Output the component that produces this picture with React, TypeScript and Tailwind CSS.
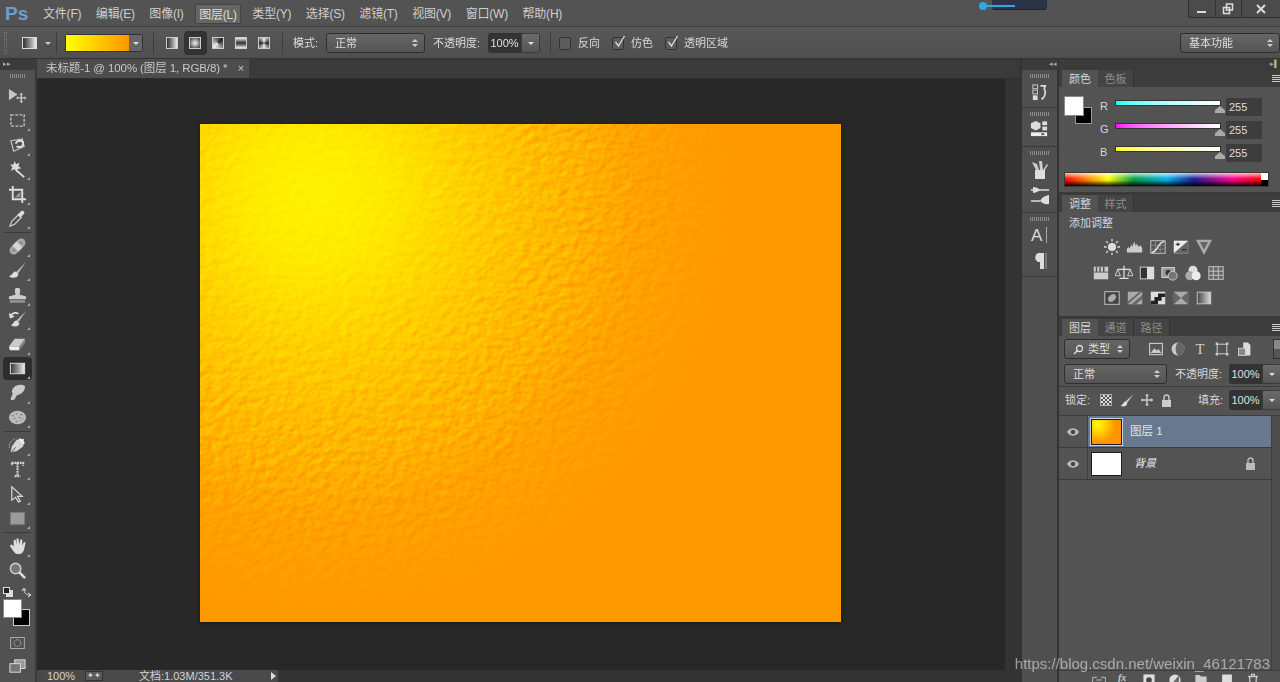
import React from "react";

const F = "font-['Liberation_Sans','Noto_Sans_CJK_SC',sans-serif]";

function I({ children, s = 20, c = "" }: { children: React.ReactNode; s?: number; c?: string }) {
  return (
    <svg width={s} height={s} viewBox="0 0 20 20" className={"shrink-0 " + c}>
      {children}
    </svg>
  );
}

const G = "#c6c6c6";

const toolIcons: Record<string, React.ReactNode> = {
  move: (<><path d="M1 2l9 6-9 6z" fill={G} /><path d="M14 6l2 2h-1.200v2.800H17.500V9.500l2 2-2 2v-1.300h-2.700V15H16l-2 2-2-2h1.200v-2.800H10.500v1.300l-2-2 2-2v1.300h2.700V8H12z" fill={G} /></>),
  marquee: <rect x="3" y="4" width="14" height="12" fill="none" stroke={G} strokeWidth="1.400" strokeDasharray="3 1.600" />,
  lasso: (<><path d="M3 5l12-2 2 8-11 5z" fill="none" stroke={G} strokeWidth="1.300" /><path d="M8 8c2-4 8-4 8 0s-5 4-7 3" fill="none" stroke="#ddd" strokeWidth="2" /></>),
  wand: (<><path d="M9 11l8 7" stroke="#ddd" strokeWidth="2" /><path d="M7 1l1.500 3.500L12 3l-1 3.700 3 2-3.700.7L9 13 7 9.700 3 11l1.700-3.600L2 5l3.800-.2z" fill="#ddd" /></>),
  crop: (<><path d="M5 1v14h14M1 5h14v14" fill="none" stroke="#ddd" strokeWidth="2" /><path d="M7 13l6-6v6z" fill="#999" /></>),
  eyedrop: (<><path d="M2 18l2-5 7-7 3 3-7 7z" fill="none" stroke="#ccc" strokeWidth="1.300" /><path d="M10 6l4-4c2-1 4 1 3 3l-4 4z" fill="#ddd" /></>),
  heal: (<g transform="rotate(-45 10 10)"><rect x="0" y="5.500" width="20" height="9" rx="4.500" fill="#aaa" /><rect x="7" y="5.500" width="6" height="9" fill="#d5d5d5" /><path d="M3 9h3M3 11h3M14 9h3M14 11h3" stroke="#777" /></g>),
  brush: (<><path d="M19 1L8 12l2 2z" fill="#bbb" /><path d="M8 11c-3 0-3 4-7 5 4 3 9 2 10-2z" fill="#ddd" /></>),
  stamp: (<><path d="M8 2h4l1 3-1 4 7 2v3H1v-3l7-2-1-4z" fill="#ccc" /><rect x="2" y="15" width="16" height="2.500" fill="#999" /></>),
  history: (<><path d="M19 1L9 11l2 2z" fill="#bbb" /><path d="M9 11c-3 0-3 4-6 5 4 2 8 2 9-2z" fill="#ddd" /><path d="M2 7c2-4 6-5 9-3" fill="none" stroke="#ddd" strokeWidth="1.800" /><path d="M1 3l1 6 5-2z" fill="#ddd" /></>),
  eraser: (<><path d="M7 4h11l-6 8H1z" fill="#ccc" /><path d="M1 12h11v4H2z" fill="#eee" /><path d="M12 12l6-8v4l-6 8z" fill="#888" /></>),
  gradient: (<><defs><linearGradient id="tg"><stop offset="0" stopColor="#333" /><stop offset="1" stopColor="#eee" /></linearGradient></defs><rect x="2.500" y="4.500" width="15" height="11" fill="url(#tg)" stroke="#ddd" /></>),
  smudge: (<path d="M8 2c5-2 10-1 10 1s-2 7-6 8-3 2-5 5c-2 2-5 1-4-1l2-5c-2-3 0-6 3-8z" fill="#c9c9c9" />),
  sponge: (<><ellipse cx="10" cy="10" rx="9" ry="7" fill="#bbb" /><path d="M4 8h2M8 6h2M13 7h2M6 11h2M11 10h2M15 11h1M8 14h2M13 13h1" stroke="#777" strokeWidth="1.200" /></>),
  pen: (<><path d="M17 3l-8 1-5 7-1 6 6-1 7-5z" fill="#d4d4d4" /><path d="M12 3l5 5" stroke="#eee" strokeWidth="2.400" /><path d="M4 17l4-5" stroke="#555" /><path d="M7 3C3 5 0 9 2 14" fill="none" stroke="#bbb" strokeDasharray="1.400 1.200" /></>),
  type: (<path d="M4 3h12v3M10 3v14M7 17h6M4 3v3" fill="none" stroke="#d4d4d4" strokeWidth="2.200" strokeDasharray="2 .8" />),
  select: <path d="M4 2v14l4-3 3 5 2-1-3-5h5z" fill="#555" stroke="#ddd" strokeWidth="1.200" />,
  shape: <rect x="2.500" y="3.500" width="15" height="13" fill="#9a9a9a" stroke="#777" />,
  hand: (<path d="M3 11l-1-2 2-1 2 2V3l2 0 1 5V1.500h2L12 8l1-5.500h2L15 9l2-4 1.500 1L17 13c-1 3-2 5-6 5-4 0-5-3-8-7z" fill="#ddd" />),
  zoom: (<><circle cx="8" cy="8" r="5.500" fill="#777" stroke="#ccc" strokeWidth="1.600" /><path d="M12 12l6 6" stroke="#ddd" strokeWidth="2.600" /></>),
  mask: (<><rect x="2" y="3" width="16" height="13" fill="none" stroke="#bbb" /><circle cx="10" cy="9.500" r="4" fill="none" stroke="#ddd" strokeDasharray="1.500 1.200" /></>),
  screen: (<><rect x="7" y="3" width="11" height="9" fill="#999" stroke="#ddd" /><rect x="2" y="7" width="11" height="9" fill="#777" stroke="#ddd" /></>),
};

function Tool({ name, corner = true, active = false }: { name: string; corner?: boolean; active?: boolean }) {
  return (
    <div className="relative flex items-center justify-center shrink-0 h-[24.5px]">
      <div className={"relative flex items-center justify-center w-[29px] h-[23px] rounded-sm " + (active ? "bg-[#2d2d2d]" : "")}>
        <I s={19}>{toolIcons[name]}</I>
        {corner && <span className="absolute right-[2px] bottom-[1px] w-0 h-0 border-l-[3px] border-l-transparent border-b-[3px] border-b-[#aaa]" />}
      </div>
    </div>
  );
}

const Sep = () => <div className="h-px bg-[#3a3a3a] mx-[4px] my-[1px] shrink-0" />;

function Updown() {
  return (
    <span className="flex flex-col gap-[2px] items-center">
      <span className="w-0 h-0 border-x-[3px] border-x-transparent border-b-[3px] border-b-[#ccc]" />
      <span className="w-0 h-0 border-x-[3px] border-x-transparent border-t-[3px] border-t-[#ccc]" />
    </span>
  );
}

function Select({ text, w, h = "h-[20px]", pre }: { text: string; w: string; h?: string; pre?: React.ReactNode }) {
  return (
    <div className={"flex items-center justify-between pl-[8px] pr-[6px] rounded-[3px] border border-[#2e2e2e] bg-gradient-to-b from-[#666] to-[#545454] text-[#dedede] text-[11px] shrink-0 " + w + " " + h}>
      <span className="flex items-center gap-[4px]">{pre}{text}</span>
      <Updown />
    </div>
  );
}

function Pct({ w = "w-[33px]" }: { w?: string }) {
  return (
    <div className="flex h-[20px] shrink-0 rounded-[3px] overflow-hidden">
      <div className={"bg-[#333] text-[#e0e0e0] text-[11px] flex items-center justify-center " + w}>100%</div>
      <div className="w-[19px] bg-gradient-to-b from-[#6c6c6c] to-[#555] flex items-center justify-center border border-[#3a3a3a]">
        <span className="w-0 h-0 border-x-[3px] border-x-transparent border-t-[3px] border-t-[#ddd]" />
      </div>
    </div>
  );
}

function Check({ on, label }: { on?: boolean; label: string }) {
  return (
    <div className="flex items-center gap-[7px] shrink-0">
      <div className="relative w-[12px] h-[13px] rounded-[2px] bg-[#5c5c5c] border border-[#333]">
        {on && (
          <svg width="14" height="14" viewBox="0 0 14 14" className="absolute -top-[3px] left-0">
            <path d="M2.500 7l3 4 6-10" fill="none" stroke="#ddd" strokeWidth="1.300" />
          </svg>
        )}
      </div>
      <span className="text-[11px] text-[#d8d8d8]">{label}</span>
    </div>
  );
}

const gradBtn = [
  "bg-gradient-to-r from-[#333] to-[#eee]",
  "bg-[radial-gradient(circle,#f4f4f4,#333)]",
  "bg-[conic-gradient(from_45deg,#222,#eee_50%,#222)]",
  "bg-gradient-to-b from-[#eee] via-[#333] to-[#eee]",
  "bg-[conic-gradient(#eee,#222,#eee,#222,#eee)]",
];

function OptionsBar() {
  return (
    <div className="h-[32px] pt-[1px] flex items-center bg-gradient-to-b from-[#585858] to-[#4f4f4f] border-b border-[#333] shrink-0">
      <div className="w-[3px] h-[22px] ml-[4px] border-x border-dotted border-[#777]" />
      <div className="ml-[15px] w-[15px] h-[12px] bg-gradient-to-r from-[#333] to-[#eee] border border-[#ddd]" />
      <span className="ml-[8px] w-0 h-0 border-x-[3px] border-x-transparent border-t-[3px] border-t-[#ccc]" />
      <div className="w-px h-[22px] bg-[#3d3d3d] ml-[5px]" />
      <div className="ml-[8px] flex h-[18px] w-[78px] border border-[#333] rounded-[2px]">
        <div className="w-[63px] bg-gradient-to-r from-[#ffff00] to-[#ff9400]" />
        <div className="flex-1 bg-[#666] flex items-center justify-center">
          <span className="w-0 h-0 border-x-[3px] border-x-transparent border-t-[3px] border-t-[#ddd]" />
        </div>
      </div>
      <div className="w-px h-[22px] bg-[#3d3d3d] ml-[10px]" />
      <div className="flex ml-[7px] w-[114px]">
        {gradBtn.map((g, i) => (
          <div key={i} className={"h-[24px] flex-1 flex items-center justify-center rounded-sm " + (i === 1 ? "bg-[#333]" : "")}>
            <div className={"w-[12px] h-[12px] border border-[#ccc] " + g} />
          </div>
        ))}
      </div>
      <div className="w-px h-[22px] bg-[#3d3d3d] ml-[7px]" />
      <span className="ml-[10px] text-[11px] text-[#dcdcdc] w-[33px] shrink-0">模式:</span>
      <Select text="正常" w="w-[99px]" />
      <span className="ml-[8px] text-[11px] text-[#dcdcdc] w-[55px] shrink-0">不透明度:</span>
      <Pct />
      <div className="w-px h-[22px] bg-[#3d3d3d] ml-[10px] mr-[8px]" />
      <div className="flex gap-[12px]">
        <Check label="反向" />
        <Check on label="仿色" />
        <Check on label="透明区域" />
      </div>
      <div className="ml-auto">
        <Select text="基本功能" w="w-[100px]" />
      </div>
    </div>
  );
}

const menus = ["文件(F)", "编辑(E)", "图像(I)", "图层(L)", "类型(Y)", "选择(S)", "滤镜(T)", "视图(V)", "窗口(W)", "帮助(H)"];

function MenuBar() {
  return (
    <div className="relative h-[27px] pt-[1px] flex items-center bg-[#535353] border-b border-[#3e3e3e] shrink-0">
      <span className="w-[40px] pl-[5px] text-[#6b9fd1] font-bold text-[19px] leading-none">Ps</span>
      <div className="flex items-center gap-[8.500px]">
        {menus.map((m, i) => (
          <span key={m} className={"px-[3px] h-[20px] leading-[20px] text-[12px] tracking-[-.2px] rounded-[2px] text-[#cfcfcf] " + (i === 3 ? "bg-[#666] border border-[#444] leading-[18px] px-[2px] text-[#dcdcdc]" : "")}>
            {m}
          </span>
        ))}
      </div>
      <div className="absolute right-0 top-0 flex h-[18px] w-[92px] border-l border-b border-[#2f2f2f] rounded-bl-[3px] bg-[#4b4b4b]">
        <div className="flex-1 border-r border-[#333] flex items-end justify-center pb-[4px]"><span className="w-[9px] h-[2px] bg-[#ddd]" /></div>
        <div className="flex-1 border-r border-[#333] flex items-center justify-center">
          <svg width="12" height="12" viewBox="0 0 12 12"><path d="M4.500 1h6v6h-6zM1.500 4.500h6v6h-6z" fill="#4b4b4b" stroke="#ddd" strokeWidth="1.500" /></svg>
        </div>
        <div className="w-[38px] flex items-center justify-center">
          <svg width="10" height="10" viewBox="0 0 10 10"><path d="M1 1l8 8M9 1l-8 8" stroke="#ddd" strokeWidth="2" /></svg>
        </div>
      </div>
      <div className="absolute left-[979px] top-0 flex items-center">
        <div className="absolute left-[13px] top-0 w-[55px] h-[10px] bg-[#2b3346] rounded-b-[3px] border-b border-[#222]" />
        <span className="relative w-[8px] h-[8px] rounded-full bg-[#2fa9e0] mt-[2px]" />
        <span className="relative w-[28px] h-[2px] bg-[#2fa9e0] mt-[2px]" />
      </div>
    </div>
  );
}

function Toolbar() {
  return (
    <div className="w-[37px] shrink-0 flex flex-col border-r-[2px] border-[#3a3a3a] bg-[#515151]">
      <div className="h-[11px] bg-[#3b3b3b] text-[#aaa] text-[7px] leading-[10px] pl-[3px] shrink-0">▸▸</div>
      <div className="h-[15px] flex justify-center pt-[4px] shrink-0"><div className="w-[16px] h-[4px] bg-[repeating-linear-gradient(90deg,#8a8a8a_0,#8a8a8a_1px,transparent_1px,transparent_2px)]" /></div>
      <div className="flex flex-col -mt-[1px]">
        <Tool name="move" corner={false} />
        <Tool name="marquee" />
        <Tool name="lasso" />
        <Tool name="wand" />
        <Tool name="crop" />
        <Tool name="eyedrop" />
        <Sep />
        <Tool name="heal" />
        <Tool name="brush" />
        <Tool name="stamp" />
        <Tool name="history" />
        <Tool name="eraser" />
        <Tool name="gradient" active />
        <Tool name="smudge" />
        <Tool name="sponge" />
        <Sep />
        <Tool name="pen" />
        <Tool name="type" />
        <Tool name="select" />
        <Tool name="shape" />
        <Sep />
        <Tool name="hand" />
        <Tool name="zoom" corner={false} />
      </div>
      <div className="flex justify-between px-[3px] h-[14px] items-center mt-[2px]">
        <svg width="10" height="10" viewBox="0 0 10 10"><rect x="3" y="3" width="7" height="7" fill="#ddd" /><rect x=".5" y=".5" width="6" height="6" fill="#222" stroke="#ddd" /></svg>
        <svg width="11" height="11" viewBox="0 0 11 11"><path d="M1 4l2-3 2 3M3 2c0 4 2 6 6 6M7 6l3 2-3 2" fill="none" stroke="#ddd" /></svg>
      </div>
      <div className="relative h-[30px] shrink-0">
        <div className="absolute left-[13px] top-[10px] w-[17px] h-[17px] bg-black border border-[#ccc]" />
        <div className="absolute left-[3px] top-0 w-[19px] h-[19px] bg-white border border-[#888]" />
      </div>
      <div className="flex justify-center pt-[6px]"><I s={17}>{toolIcons.mask}</I></div>
      <div className="flex justify-center pt-[5px]"><I s={19}>{toolIcons.screen}</I></div>
    </div>
  );
}

function Artwork() {
  return (
    <svg width="641" height="498" viewBox="0 0 641 498" className="block shrink-0 shadow-[0_1px_4px_rgba(0,0,0,.5)]">
      <defs>
        <radialGradient id="sun" gradientUnits="userSpaceOnUse" cx="115" cy="70" r="400">
          <stop offset="0" stopColor="#fff000" />
          <stop offset=".16" stopColor="#ffe800" />
          <stop offset=".36" stopColor="#ffcb00" />
          <stop offset=".6" stopColor="#ffab00" />
          <stop offset=".8" stopColor="#ff9a00" />
          <stop offset="1" stopColor="#ff9900" />
        </radialGradient>
        <radialGradient id="fade" gradientUnits="userSpaceOnUse" cx="115" cy="70" r="470">
          <stop offset="0" stopColor="#888" />
          <stop offset=".55" stopColor="#888" />
          <stop offset=".75" stopColor="#333" />
          <stop offset=".9" stopColor="#000" />
        </radialGradient>
        <mask id="texMask" maskUnits="userSpaceOnUse" x="0" y="0" width="641" height="498">
          <rect width="641" height="498" fill="url(#fade)" />
        </mask>
        <filter id="bump" x="0" y="0" width="100%" height="100%" colorInterpolationFilters="sRGB">
          <feTurbulence type="fractalNoise" baseFrequency="0.11 0.13" numOctaves="2" seed="8" result="n" />
          <feDiffuseLighting in="n" surfaceScale="1.500" diffuseConstant="1" lightingColor="#ffffff">
            <feDistantLight azimuth="225" elevation="40" />
          </feDiffuseLighting>
        </filter>
      </defs>
      <rect width="641" height="498" fill="url(#sun)" />
      <g mask="url(#texMask)" className="mix-blend-overlay">
        <rect width="641" height="498" filter="url(#bump)" />
      </g>
    </svg>
  );
}

function Workspace() {
  return (
    <div className="flex-1 min-w-0 flex flex-col bg-[#282828]">
      <div className="h-[20px] flex bg-[#3a3a3a] shrink-0 border-b border-[#2e2e2e]">
        <div className="w-[212px] bg-[#4d4d4d] flex items-center justify-between pl-[9px] pr-[5px] text-[11.500px] text-[#c8c8c8] tracking-[-.1px]">
          <span>未标题-1 @ 100% (图层 1, RGB/8) *</span>
          <span className="text-[11px] leading-none">×</span>
        </div>
      </div>
      <div className="flex-1 min-h-0 flex">
        <div className="flex-1 flex items-start justify-center pt-[45px] pr-[2px]">
          <Artwork />
        </div>
        <div className="w-[15px] bg-[#333]" />
      </div>
      <div className="h-[12px] flex shrink-0 bg-[#333] overflow-hidden">
        <div className="w-[241px] bg-[#494949] flex items-center text-[11px] leading-none text-[#d4d4d4] relative">
          <span className="ml-[10px] w-[38px]">100%</span>
          <span className="w-[18px] h-[10px] rounded-[1px] border border-[#333] bg-[#5a5a5a] text-[8px] leading-[8px] text-center text-[#ddd]">✦✦</span>
          <span className="ml-[36px]">文档:1.03M/351.3K</span>
          <span className="absolute right-[2px] w-0 h-0 border-y-[4px] border-y-transparent border-l-[5px] border-l-[#ddd]" />
        </div>
      </div>
    </div>
  );
}

const dockIcons: React.ReactNode[] = [
  <><rect x="3" y="2" width="5" height="4" fill="none" stroke="#ccc" /><rect x="3" y="7.500" width="5" height="4" fill="none" stroke="#ccc" /><rect x="3" y="13" width="5" height="5" fill="#ddd" /><path d="M11 3h5l-1 3c2 4 1 9-3 11" fill="none" stroke="#ddd" strokeWidth="1.800" /></>,
  <><path d="M6 2l5 2.500v5L6 12l-5-2.500v-5z" fill="#ddd" /><rect x="13" y="2.500" width="5" height="4" fill="#ddd" /><rect x="13" y="8" width="5" height="4" fill="#ddd" /><rect x="1" y="14" width="17" height="4" fill="#eee" /><rect x="12" y="15" width="3" height="2" fill="#555" /></>,
  <><rect x="5" y="10" width="10" height="9" fill="#ddd" /><path d="M6 10L2 2l5 2 2 6zM10 10l-1-9 3 0 1 9zM13 10l4-6 1 1-3 5z" fill="#ccc" /></>,
  <><path d="M1 4h18M1 15h9" stroke="#ddd" strokeWidth="1.600" /><path d="M3 1c5 0 7 3 7 3s-3 3-7 3zM10 15c2-5 9-6 9-6v9c-4 1-7-1-9-3z" fill="#ddd" /></>,
  <><text x="1" y="16" fontSize="17" fill="#ddd" fontFamily="Liberation Sans, sans-serif">A</text><path d="M16.500 2v16" stroke="#aaa" /></>,
  <><path d="M12 2H8a5 5 0 000 9h2v7h4V2z" fill="#ddd" /><rect x="15" y="2" width="2" height="16" fill="#777" /></>,
];

function Dock() {
  const Grip = () => <div className="h-[8px] flex justify-center pt-[2px] shrink-0"><div className="w-[19px] h-[4px] bg-[repeating-linear-gradient(90deg,#8a8a8a_0,#8a8a8a_1px,transparent_1px,transparent_2px)]" /></div>;
  return (
    <div className="w-[39px] shrink-0 flex flex-col bg-[#4f4f4f] border-x-[2px] border-[#333]">
      <div className="h-[11px] bg-[#3b3b3b] text-[#aaa] text-[7px] leading-[10px] text-right pr-[1px] shrink-0 -mr-[1px]">◂◂</div>
      <div className="h-[38px] border-b border-[#3a3a3a] pt-[2px] shrink-0"><Grip /><div className="flex justify-center pt-[3px]"><I s={19}>{dockIcons[0]}</I></div></div>
      <div className="h-[39px] border-b border-[#3a3a3a] pt-[2px] shrink-0"><Grip /><div className="flex justify-center pt-[1px]"><I s={19}>{dockIcons[1]}</I></div></div>
      <div className="h-[66px] border-b border-[#3a3a3a] pt-[2px] shrink-0"><Grip /><div className="flex flex-col items-center gap-[6px] pt-[3px]"><I s={20}>{dockIcons[2]}</I><I s={20}>{dockIcons[3]}</I></div></div>
      <div className="h-[64px] border-b border-[#3a3a3a] pt-[2px] shrink-0"><Grip /><div className="flex flex-col items-center gap-[6px] pt-[2px]"><I s={20}>{dockIcons[4]}</I><I s={20}>{dockIcons[5]}</I></div></div>
    </div>
  );
}

function Tabs({ items }: { items: string[] }) {
  return (
    <div className="h-[17px] flex bg-[#3d3d3d] items-stretch relative shrink-0">
      <div className="w-[3px]" />
      {items.map((t, i) => (
        <div key={t} className={"w-[36px] text-center text-[11px] leading-[18px] " + (i === 0 ? "bg-[#535353] text-[#d6d6d6]" : "bg-[#444] text-[#8d8d8d] border-r border-[#333]")}>
          {t}
        </div>
      ))}
      <div className="absolute right-0 top-[5px] flex flex-col gap-[1px] w-[8px]">
        <span className="h-px bg-[#ccc]" /><span className="h-px bg-[#ccc]" /><span className="h-px bg-[#ccc]" /><span className="h-px bg-[#ccc]" />
      </div>
    </div>
  );
}

function SliderRow({ label, bar }: { label: string; bar: string }) {
  return (
    <div className="flex items-center h-[23px]">
      <span className="w-[21px] pl-[6px] text-[11px] leading-none text-[#d6d6d6] font-normal">{label}</span>
      <div className="relative w-[104px] h-[4px] border border-[#333] -mt-[7px] box-content">
        <div className={"w-full h-full " + bar} />
        <span className="absolute -right-[5px] top-[5px] w-[10px] h-[7px] bg-[#aaa] [clip-path:polygon(50%_0,100%_60%,100%_100%,0_100%,0_60%)]" />
      </div>
      <div className="ml-[5px] w-[36px] h-[18px] bg-[#3d3d3d] text-[#ddd] text-[11px] leading-[18px] pl-[3px]">255</div>
    </div>
  );
}

function ColorPanel() {
  return (
    <div className="h-[125px] flex flex-col bg-[#535353] shrink-0 border-b-[3px] border-[#3a3a3a]">
      <Tabs items={["颜色", "色板"]} />
      <div className="relative flex pl-[5px] pt-[9px]">
        <div className="relative w-[30px] h-[30px] shrink-0">
          <div className="absolute left-[11px] top-[11px] w-[17px] h-[17px] bg-black border border-[#999]" />
          <div className="absolute left-0 top-0 w-[20px] h-[20px] bg-white border border-[#888]" />
        </div>
        <div className="flex flex-col -mt-[1px]">
          <SliderRow label="R" bar="bg-gradient-to-r from-[#00ffff] to-white" />
          <SliderRow label="G" bar="bg-gradient-to-r from-[#ff00ff] to-white" />
          <SliderRow label="B" bar="bg-gradient-to-r from-[#ffff00] to-white" />
        </div>
      </div>
      <div className="relative mx-[5px] mt-[8px] w-[205px] h-[15px] flex border border-[#3a3a3a]">
        <div className="flex-1 relative bg-[linear-gradient(90deg,#ff0000,#ffff00_22%,#00a040_35%,#00b0f0_52%,#1c1c90_66%,#ff0090_85%,#ff0000)]">
          <div className="absolute inset-0 bg-[linear-gradient(180deg,rgba(255,255,255,.75),rgba(255,255,255,0)_45%,rgba(0,0,0,0)_55%,rgba(0,0,0,.95))]" />
        </div>
        <div className="w-[7px] flex flex-col"><div className="flex-1 bg-white" /><div className="flex-1 bg-black" /></div>
      </div>
    </div>
  );
}

const adj: React.ReactNode[][] = [
  [
    <><circle cx="10" cy="10" r="4.500" fill="#ddd" /><path d="M10 1v3M10 16v3M1 10h3M16 10h3M3.500 3.500l2 2M14.500 14.500l2 2M16.500 3.500l-2 2M5.500 14.500l-2 2" stroke="#ddd" strokeWidth="1.400" /></>,
    <path d="M1 16V12l2-2 1 2 2-5 1 3 2-6 2 5 1-3 2 4 2-2 2 3v5z" fill="#ccc" />,
    <><rect x="2" y="3" width="16" height="14" fill="#555" stroke="#ccc" /><path d="M2 8h16M2 12.500h16M7 3v14M12.500 3v14" stroke="#888" /><path d="M3 16c7 0 6-11 14-12" fill="none" stroke="#eee" strokeWidth="1.500" /></>,
    <><rect x="2" y="3" width="16" height="14" fill="#eee" /><path d="M2 17L18 3v14z" fill="#666" /><path d="M4 7h5M6.500 5v4M11 13h5" stroke="#222" strokeWidth="1.200" /></>,
    <><path d="M1 2h18l-9 17z" fill="#aaa" /><path d="M5.500 4.500h9L10 13z" fill="#666" /></>,
  ],
  [
    <><rect x="2" y="3" width="16" height="14" fill="#ccc" /><path d="M2 9h16" stroke="#555" /><path d="M5 3v6M9 3v6M13 3v6" stroke="#555" strokeWidth="1.600" /></>,
    <><path d="M10 2v14M3 6h14M5 16h10" stroke="#ddd" strokeWidth="1.400" /><path d="M3 6l-3 7h6zM17 6l-3 7h6z" fill="none" stroke="#ddd" /></>,
    <><rect x="2" y="3" width="16" height="14" fill="#ddd" /><rect x="3" y="4" width="7" height="12" fill="#333" /></>,
    <><rect x="1" y="4" width="14" height="11" fill="#999" stroke="#ddd" /><circle cx="8" cy="9.500" r="3" fill="#333" /><circle cx="13" cy="13" r="5" fill="#777" stroke="#ccc" /></>,
    <><circle cx="10" cy="7" r="5" fill="#ddd" /><circle cx="6.500" cy="13" r="5" fill="#aaa" /><circle cx="13.500" cy="13" r="5" fill="#eee" /></>,
    <><rect x="2" y="3" width="16" height="14" fill="#666" stroke="#ccc" /><path d="M2 8h16M2 12.500h16M7 3v14M12.500 3v14" stroke="#ccc" /></>,
  ],
  [
    <><rect x="2" y="3" width="16" height="14" fill="#444" stroke="#ccc" /><ellipse cx="10" cy="10" rx="5" ry="3.500" fill="#aaa" transform="rotate(-40 10 10)" /></>,
    <><rect x="2" y="3" width="16" height="14" fill="#aaa" /><path d="M2 14L15 3h3L2 17zM6 17L18 7v4l-7 6z" fill="#666" /></>,
    <><rect x="2" y="3" width="16" height="14" fill="#ddd" /><path d="M2 17v-4h4V9h4V5h8v4h-4v4h-4v4z" fill="#222" /></>,
    <><rect x="2" y="3" width="16" height="14" fill="#aaa" /><path d="M2 3l8 7-8 7zM18 3l-8 7 8 7z" fill="#666" /></>,
    <><defs><linearGradient id="ag"><stop offset="0" stopColor="#444" /><stop offset="1" stopColor="#ddd" /></linearGradient></defs><rect x="2.500" y="3.500" width="15" height="13" fill="url(#ag)" stroke="#ccc" /></>,
  ],
];

function AdjustPanel() {
  return (
    <div className="h-[124px] flex flex-col bg-[#535353] shrink-0 border-b-[3px] border-[#3a3a3a]">
      <Tabs items={["调整", "样式"]} />
      <div className="pl-[10px] pt-[2px] text-[11px] leading-[18px] text-[#d6d6d6]">添加调整</div>
      <div className="flex flex-col items-center gap-[7.500px] pt-[6px] pr-[23px]">
        {adj.map((row, i) => (
          <div key={i} className="flex gap-[5px]">
            {row.map((n, j) => <I key={j} s={18}>{n}</I>)}
          </div>
        ))}
      </div>
    </div>
  );
}

function Eye() {
  return (
    <svg width="14" height="10" viewBox="0 0 14 10"><path d="M1 5c3-5 9-5 12 0-3 5-9 5-12 0z" fill="#bbb" /><circle cx="7" cy="5" r="2.200" fill="#444" /></svg>
  );
}

function LockIcon({ c = "#ccc" }: { c?: string }) {
  return (
    <svg width="11" height="13" viewBox="0 0 11 13"><path d="M3 6V3.500a2.500 2.500 0 015 0V6" fill="none" stroke={c} strokeWidth="1.400" /><rect x="1" y="6" width="9" height="7" fill={c} /></svg>
  );
}

function LayersPanel() {
  return (
    <div className="flex-1 min-h-0 flex flex-col bg-[#535353]">
      <Tabs items={["图层", "通道", "路径"]} />
      <div className="h-[26px] flex items-center pl-[5px] shrink-0">
        <Select
          text="类型"
          w="w-[66px]"
          pre={<svg width="11" height="11" viewBox="0 0 11 11"><circle cx="6.500" cy="4.500" r="3" fill="none" stroke="#ddd" strokeWidth="1.300" /><path d="M4.500 6.500L1 10" stroke="#ddd" strokeWidth="1.500" /></svg>}
        />
        <div className="flex gap-[6px] items-center ml-[18px]">
          <I s={16}><rect x="2" y="3" width="16" height="14" fill="#555" stroke="#ccc" strokeWidth="1.400" /><path d="M3 15l5-6 3 3 2-2 4 5z" fill="#ccc" /></I>
          <I s={16}><circle cx="10" cy="10" r="8" fill="#ccc" /><path d="M10 2a8 8 0 010 16c-4-4-4-12 0-16z" fill="#666" /></I>
          <span className="w-[16px] text-center text-[15px] leading-none text-[#ccc] font-['Liberation_Serif',serif]">T</span>
          <I s={16}><rect x="4" y="4" width="12" height="12" fill="none" stroke="#ccc" strokeWidth="1.300" /><path d="M2 2h3v3H2zM15 2h3v3h-3zM2 15h3v3H2zM15 15h3v3h-3z" fill="#ccc" /></I>
          <I s={16}><path d="M9 2h6l3 3v13H9z" fill="#ddd" /><rect x="3" y="9" width="9" height="9" fill="#888" stroke="#ddd" /></I>
        </div>
        <div className="ml-auto w-[7px] h-[20px] flex flex-col border border-[#333] border-r-0">
          <div className="flex-1 bg-[#888]" /><div className="flex-1 bg-[#555]" />
        </div>
      </div>
      <div className="h-[25px] flex items-center pl-[5px] shrink-0 border-b border-[#3e3e3e]">
        <Select text="正常" w="w-[103px]" />
        <span className="ml-[8px] w-[54px] text-[11px] text-[#d8d8d8] shrink-0">不透明度:</span>
        <Pct />
      </div>
      <div className="h-[29px] flex items-center pl-[6px] shrink-0 border-b border-[#3e3e3e] pb-[2px]">
        <span className="w-[34px] text-[11px] text-[#d8d8d8] shrink-0">锁定:</span>
        <div className="flex items-center gap-[6px]">
          <span className="w-[12px] h-[12px] mx-[1px] border border-[#aaa] bg-[repeating-conic-gradient(#ddd_0_25%,#555_0_50%)] bg-[length:4px_4px]" />
          <I s={15}><path d="M19 2L9 11l2 2z" fill="#ccc" /><path d="M9 11c-3 0-3 4-7 6 4 2 9 1 9-4z" fill="#ddd" /></I>
          <I s={14}><path d="M10 1l3 3h-2v5h5V7l3 3-3 3v-2h-5v5h2l-3 3-3-3h2v-5H4v2l-3-3 3-3v2h5V4H7z" fill="#ccc" /></I>
          <span className="ml-[1px]"><LockIcon /></span>
        </div>
        <span className="ml-[26px] w-[31px] text-[11px] text-[#d8d8d8] shrink-0">填充:</span>
        <Pct />
      </div>
      <div className="flex-1 min-h-0 flex">
        <div className="w-[212px] shrink-0 flex flex-col">
          <div className="flex h-[32px] border-b border-[#3c3c3c]">
            <div className="w-[29px] flex items-center justify-center border-r border-[#3f3f3f]"><Eye /></div>
            <div className="flex-1 bg-[#67788f] flex items-center text-[11.500px] text-[#e4e4e4]">
              <div className="relative ml-[3px] w-[31px] h-[26px] border border-[#1d1d1d] bg-[radial-gradient(circle_at_20%_20%,#ffff00,#ff9400_60%)] outline outline-[1px] outline-[#c8d2de]" />
              <span className="ml-[8px]">图层 1</span>
            </div>
          </div>
          <div className="flex h-[32px] border-b border-[#3c3c3c]">
            <div className="w-[29px] flex items-center justify-center border-r border-[#3f3f3f]"><Eye /></div>
            <div className="flex-1 flex items-center">
              <div className="ml-[3px] w-[31px] h-[24px] bg-white border border-[#1d1d1d]" />
              <span className="ml-[12px] text-[11px] italic text-[#eee]">背景</span>
              <span className="ml-auto mr-[15px]"><LockIcon c="#bbb" /></span>
            </div>
          </div>
        </div>
        <div className="flex-1 border-l border-[#3f3f3f] bg-[#4d4d4d]" />
      </div>
      <div className="h-[12px] shrink-0 flex items-start justify-end gap-[12px] pt-[2px] pr-[20px] overflow-hidden border-t border-[#3e3e3e]">
        <I s={14}><path d="M7 6H4a4 4 0 000 8h3M13 6h3a4 4 0 010 8h-3M6 10h8" fill="none" stroke="#bbb" strokeWidth="1.600" /></I>
        <span className="text-[10px] italic font-bold leading-[9px] text-[#ccc] font-['Liberation_Serif',serif] w-[12px]">fx</span>
        <I s={14}><rect x="2" y="2" width="16" height="16" fill="#ddd" /><circle cx="10" cy="10" r="4" fill="#444" /></I>
        <I s={14}><circle cx="10" cy="10" r="8" fill="#ddd" /><path d="M15 4L5 16c8 2 13-4 10-12z" fill="#666" /></I>
        <I s={14}><path d="M2 3h6l2 2h8v12H2z" fill="#ccc" /></I>
        <I s={14}><path d="M3 2h14v16H8l-5-5z" fill="#ddd" /></I>
        <I s={14}><path d="M3 5h14M8 5V2h4v3M5 5l1 14h8l1-14" fill="none" stroke="#ccc" strokeWidth="1.800" /></I>
      </div>
    </div>
  );
}

function RightPanels() {
  return (
    <div className="w-[221px] shrink-0 flex flex-col bg-[#3b3b3b]">
      <div className="h-[11px] bg-[#3b3b3b] text-[#aaa] text-[7px] leading-[10px] text-right pr-[1px] shrink-0">▸▌</div>
      <ColorPanel />
      <AdjustPanel />
      <LayersPanel />
    </div>
  );
}

export default function App() {
  return (
    <div className={"relative w-[1280px] h-[682px] overflow-hidden flex flex-col bg-[#535353] " + F}>
      <MenuBar />
      <OptionsBar />
      <div className="flex-1 min-h-0 flex">
        <Toolbar />
        <Workspace />
        <Dock />
        <RightPanels />
      </div>
      <span className="absolute right-[10px] bottom-[11px] text-[15px] leading-none text-white/50 font-['Liberation_Sans',sans-serif]">https://blog.csdn.net/weixin_46121783</span>
    </div>
  );
}
